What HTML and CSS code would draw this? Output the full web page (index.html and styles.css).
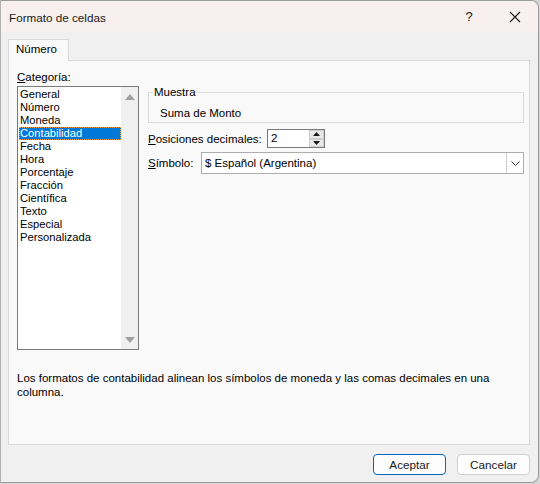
FILE: index.html
```html
<!DOCTYPE html>
<html lang="es">
<head>
<meta charset="utf-8">
<title>Formato de celdas</title>
<link rel="stylesheet" href="styles.css">
</head>
<body>
<div class="window">
  <div class="titlebar">
    <span class="title">Formato de celdas</span>
    <span class="tb-help">?</span>
    <span class="tb-close"><svg width="12" height="12" viewBox="0 0 12 12"><path d="M1 1L11 11M11 1L1 11" stroke="#1a1a1a" stroke-width="1.1" fill="none"/></svg></span>
  </div>
  <div class="body">
    <div class="tabs"><div class="tab">Número</div></div>
    <div class="panel">
      <div class="main">
        <div class="leftcol">
          <div class="lbl"><u>C</u>ategoría:</div>
          <div class="listbox">
            <ul class="items">
              <li>General</li>
              <li>Número</li>
              <li>Moneda</li>
              <li class="sel">Contabilidad</li>
              <li>Fecha</li>
              <li>Hora</li>
              <li>Porcentaje</li>
              <li>Fracción</li>
              <li>Científica</li>
              <li>Texto</li>
              <li>Especial</li>
              <li>Personalizada</li>
            </ul>
            <div class="vscroll">
              <span class="arr up"></span>
              <span class="arr down"></span>
            </div>
          </div>
        </div>
        <div class="rightcol">
          <fieldset class="sample">
            <legend>Muestra</legend>
            <div class="sample-text">Suma de Monto</div>
          </fieldset>
          <div class="row dec">
            <span class="rlbl w-dec"><u>P</u>osiciones decimales:</span>
            <div class="spin">
              <span class="spin-val">2</span>
              <div class="spin-btns">
                <span class="sb"><svg width="7" height="4" viewBox="0 0 7 4"><path d="M3.5 0L7 4H0Z" fill="#1a1a1a"/></svg></span>
                <span class="sb"><svg width="7" height="4" viewBox="0 0 7 4"><path d="M0 0H7L3.5 4Z" fill="#1a1a1a"/></svg></span>
              </div>
            </div>
          </div>
          <div class="row sym">
            <span class="rlbl w-sym"><u>S</u>ímbolo:</span>
            <div class="combo">
              <span class="combo-val">$ Español (Argentina)</span>
              <span class="combo-btn"><svg width="9" height="5" viewBox="0 0 9 5"><path d="M0.5 0.5L4.5 4.5L8.5 0.5" stroke="#333" stroke-width="1" fill="none"/></svg></span>
            </div>
          </div>
        </div>
      </div>
      <p class="desc">Los formatos de contabilidad alinean los símbolos de moneda y las comas decimales en una columna.</p>
    </div>
    <div class="footer">
      <button class="btn primary">Aceptar</button>
      <button class="btn">Cancelar</button>
    </div>
  </div>
</div>
</body>
</html>
```

FILE: styles.css
```css
* { box-sizing: border-box; }
html, body { margin: 0; padding: 0; }
body {
  width: 540px;
  height: 484px;
  background: #d6d6d6;
  font-family: "Liberation Sans", Arial, sans-serif;
  font-size: 11.5px;
  color: #000;
  overflow: hidden;
}
.window {
  width: 539px;
  height: 483px;
  border: 1px solid #9a9a9a;
  border-left-color: #b0b0b0;
  border-radius: 0 8px 8px 0;
  background: #f0f0f0;
  display: flex;
  flex-direction: column;
  overflow: hidden;
}
.titlebar {
  height: 31px;
  background: #f7f0ee;
  display: flex;
  align-items: center;
  padding-left: 8px;
  flex-shrink: 0;
}
.title { font-size: 11.7px; color: #1a1a1a; flex: 1; padding-top: 1px; }
.tb-help { width: 46px; text-align: center; font-size: 13px; color: #1a1a1a; margin-left: 1px; }
.tb-close { width: 46px; display: flex; justify-content: center; align-items: center; margin-right: 0; }
.body {
  flex: 1;
  display: flex;
  flex-direction: column;
  padding: 7px 8px 0 7px;
}
.tabs { display: flex; height: 21px; }
.tab {
  width: 61px;
  height: 22px;
  background: #f9f9f9;
  border: 1px solid #d9d9d9;
  border-bottom: none;
  padding: 3px 0 0 7px;
  position: relative;
  z-index: 1;
}
.panel {
  height: 385px;
  background: #f9f9f9;
  border: 1px solid #d9d9d9;
  padding: 9px 7px 0 8px;
  display: flex;
  flex-direction: column;
}
.main { display: flex; gap: 9px; }
.leftcol { width: 122px; display: flex; flex-direction: column; }
.lbl { line-height: 14px; margin-bottom: 2px; }
.listbox {
  width: 122px;
  height: 264px;
  border: 1px solid #7a7a7a;
  background: #fff;
  display: flex;
}
.items {
  list-style: none;
  margin: 0;
  padding: 1px 0 0 1px;
  flex: 1;
  font-size: 11.2px;
}
.items li { height: 13px; line-height: 13px; padding-left: 1px; white-space: nowrap; }
.items li.sel {
  background: #0078d7;
  color: #fff;
  outline: 1px dotted #f0a040;
  outline-offset: -1px;
}
.vscroll {
  width: 17px;
  background: #f0f0f0;
  display: flex;
  flex-direction: column;
  justify-content: space-between;
  align-items: center;
  padding: 7px 0 6px;
}
.arr { width: 0; height: 0; border-left: 5px solid transparent; border-right: 5px solid transparent; }
.arr.up { border-bottom: 6px solid #a0a0a0; }
.arr.down { border-top: 6px solid #a0a0a0; }
.rightcol { flex: 1; padding-top: 15px; max-width: 377px; }
.sample {
  margin: 0;
  padding: 7px 0 2px 0;
  border: 1px solid #dcdcdc;
  min-width: 0;
}
.sample legend {
  margin-left: 4px;
  padding: 0 1px;
  line-height: 14px;
}
.sample-text { line-height: 14px; padding-left: 11px; }
.row { display: flex; align-items: center; }
.dec { margin-top: 6px; }
.sym { margin-top: 4px; }
.rlbl { line-height: 14px; white-space: nowrap; }
.w-dec { width: 119px; }
.w-sym { width: 53px; }
.spin {
  width: 58px;
  height: 19px;
  border: 1px solid #7a7a7a;
  background: #fff;
  display: flex;
}
.spin-val { flex: 1; padding-left: 3px; line-height: 17px; }
.spin-btns { width: 16px; display: flex; flex-direction: column; border-left: 1px solid #fff; }
.sb {
  flex: 1;
  background: #e9e9e9;
  border: 1px solid #cfcfcf;
  display: flex;
  align-items: center;
  justify-content: center;
}
.combo {
  width: 323px;
  height: 22px;
  border: 1px solid #adadad;
  background: #fff;
  display: flex;
}
.combo-val { flex: 1; padding-left: 3px; line-height: 20px; }
.combo-btn {
  width: 17px;
  border-left: 1px solid #cfcfcf;
  display: flex;
  align-items: center;
  justify-content: center;
}
.desc {
  margin: 21px 0 0;
  line-height: 14px;
  padding-right: 14px;
}
.footer {
  display: flex;
  justify-content: flex-end;
  gap: 11px;
  padding: 9px 0 0;
}
.btn {
  width: 73px;
  height: 21px;
  background: #fdfdfd;
  border: 1px solid #d0d0d0;
  border-radius: 4px;
  font-family: "Liberation Sans", Arial, sans-serif;
  font-size: 11.7px;
  color: #1a1a1a;
  padding: 0;
}
.btn.primary { border-color: #0067c0; }
```
